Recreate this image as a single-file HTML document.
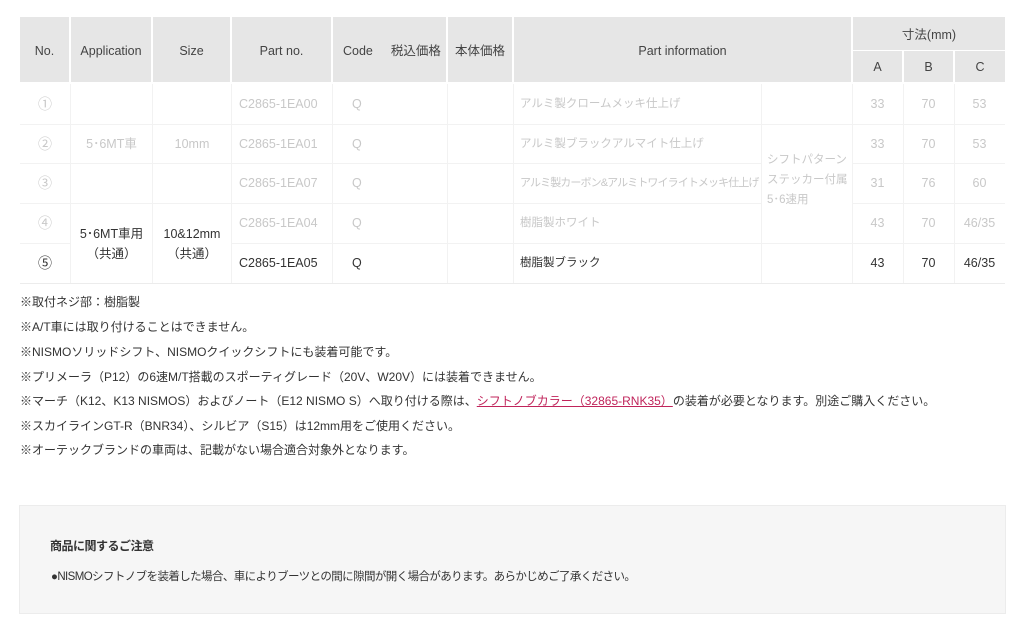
<!DOCTYPE html>
<html><head><meta charset="utf-8"><style>
*{margin:0;padding:0;box-sizing:border-box}
body{width:1024px;height:630px;background:#fff;font-family:"Liberation Sans","Noto Sans CJK JP",sans-serif;color:#333;position:relative;overflow:hidden}
.c{position:absolute;display:flex;align-items:center;justify-content:center;font-size:12.5px;text-align:center;line-height:20px;white-space:nowrap}
.h{background:#e6e6e6;color:#444;padding-top:3px}
.g{color:#c8c8c8}
.l{justify-content:flex-start;padding-left:6px}
.vl{position:absolute;width:1px;background:#f2f2f2}
.hl{position:absolute;height:1px;background:#f2f2f2}
.n{position:absolute;left:20px;font-size:12px;color:#333;line-height:16px;white-space:nowrap}
.num{font-size:14px}
a{color:#c0245b;text-decoration:underline}
</style></head><body>
<div class="c h" style="left:20px;top:17px;width:49px;height:65px">No.</div>
<div class="c h" style="left:71px;top:17px;width:80px;height:65px">Application</div>
<div class="c h" style="left:153px;top:17px;width:77px;height:65px">Size</div>
<div class="c h" style="left:232px;top:17px;width:99px;height:65px">Part no.</div>
<div class="c h" style="left:333px;top:17px;width:113px;height:65px;justify-content:flex-start;padding-left:10px">Code<span style="margin-left:18px">税込価格</span></div>
<div class="c h" style="left:448px;top:17px;width:64px;height:65px">本体価格</div>
<div class="c h" style="left:514px;top:17px;width:337px;height:65px">Part information</div>
<div class="c h" style="left:853px;top:17px;width:152px;height:33px">寸法(mm)</div>
<div class="c h" style="left:853px;top:51px;width:49px;height:31px;padding-top:0">A</div>
<div class="c h" style="left:904px;top:51px;width:49px;height:31px;padding-top:0">B</div>
<div class="c h" style="left:955px;top:51px;width:50px;height:31px;padding-top:0">C</div>
<div class="hl" style="left:20px;top:124px;width:985px"></div>
<div class="hl" style="left:20px;top:163px;width:985px"></div>
<div class="hl" style="left:20px;top:203px;width:985px"></div>
<div class="hl" style="left:20px;top:243px;width:985px"></div>
<div class="hl" style="left:20px;top:283px;width:985px;background:#ececec"></div>
<div class="vl" style="left:70px;top:84px;height:199px"></div>
<div class="vl" style="left:152px;top:84px;height:199px"></div>
<div class="vl" style="left:231px;top:84px;height:199px"></div>
<div class="vl" style="left:332px;top:84px;height:199px"></div>
<div class="vl" style="left:447px;top:84px;height:199px"></div>
<div class="vl" style="left:513px;top:84px;height:199px"></div>
<div class="vl" style="left:761px;top:84px;height:199px"></div>
<div class="vl" style="left:852px;top:84px;height:199px"></div>
<div class="vl" style="left:903px;top:84px;height:199px"></div>
<div class="vl" style="left:954px;top:84px;height:199px"></div>
<div class="c g num" style="left:20px;top:84px;width:50px;height:40px">①</div>
<div class="c g num" style="left:20px;top:124px;width:50px;height:39px">②</div>
<div class="c g num" style="left:20px;top:163px;width:50px;height:40px">③</div>
<div class="c g num" style="left:20px;top:203px;width:50px;height:40px">④</div>
<div class="c num" style="left:20px;top:243px;width:50px;height:40px">⑤</div>
<div class="c g" style="left:71px;top:125px;width:81px;height:38px;background:#fff">5･6MT車</div>
<div class="c g" style="left:153px;top:125px;width:78px;height:38px;background:#fff">10mm</div>
<div class="c" style="left:71px;top:214px;width:81px;height:60px;background:#fff">5･6MT車用<br>（共通）</div>
<div class="c" style="left:153px;top:214px;width:78px;height:60px;background:#fff">10&amp;12mm<br>（共通）</div>
<div class="c g l" style="left:233px;top:84px;width:99px;height:40px">C2865-1EA00</div>
<div class="c g l" style="left:233px;top:124px;width:99px;height:39px">C2865-1EA01</div>
<div class="c g l" style="left:233px;top:163px;width:99px;height:40px">C2865-1EA07</div>
<div class="c g l" style="left:233px;top:203px;width:99px;height:40px">C2865-1EA04</div>
<div class="c l" style="left:233px;top:243px;width:99px;height:40px">C2865-1EA05</div>
<div class="c g l" style="left:346px;top:84px;width:40px;height:40px">Q</div>
<div class="c g l" style="left:346px;top:124px;width:40px;height:39px">Q</div>
<div class="c g l" style="left:346px;top:163px;width:40px;height:40px">Q</div>
<div class="c g l" style="left:346px;top:203px;width:40px;height:40px">Q</div>
<div class="c l" style="left:346px;top:243px;width:40px;height:40px">Q</div>
<div class="c g l" style="left:514px;top:84px;width:247px;height:40px;font-size:11.5px">アルミ製クロームメッキ仕上げ</div>
<div class="c g l" style="left:514px;top:124px;width:247px;height:39px;font-size:11.5px">アルミ製ブラックアルマイト仕上げ</div>
<div class="c g l" style="left:514px;top:163px;width:247px;height:40px;font-size:11px;letter-spacing:-0.9px">アルミ製カーボン&amp;アルミトワイライトメッキ仕上げ</div>
<div class="c g l" style="left:514px;top:203px;width:247px;height:40px;font-size:11.5px">樹脂製ホワイト</div>
<div class="c l" style="left:514px;top:243px;width:247px;height:40px;font-size:11.5px">樹脂製ブラック</div>
<div class="c g" style="left:762px;top:150px;width:90px;height:66px;background:#fff;justify-content:flex-start;align-items:flex-start;padding-left:5px;text-align:left;font-size:11.5px;line-height:20px;white-space:normal">シフトパターン<br>ステッカー付属<br>5･6速用</div>
<div class="c g" style="left:852px;top:84px;width:51px;height:40px">33</div><div class="c g" style="left:903px;top:84px;width:51px;height:40px">70</div><div class="c g" style="left:954px;top:84px;width:51px;height:40px">53</div>
<div class="c g" style="left:852px;top:124px;width:51px;height:39px">33</div><div class="c g" style="left:903px;top:124px;width:51px;height:39px">70</div><div class="c g" style="left:954px;top:124px;width:51px;height:39px">53</div>
<div class="c g" style="left:852px;top:163px;width:51px;height:40px">31</div><div class="c g" style="left:903px;top:163px;width:51px;height:40px">76</div><div class="c g" style="left:954px;top:163px;width:51px;height:40px">60</div>
<div class="c g" style="left:852px;top:203px;width:51px;height:40px">43</div><div class="c g" style="left:903px;top:203px;width:51px;height:40px">70</div><div class="c g" style="left:954px;top:203px;width:51px;height:40px">46/35</div>
<div class="c" style="left:852px;top:243px;width:51px;height:40px">43</div><div class="c" style="left:903px;top:243px;width:51px;height:40px">70</div><div class="c" style="left:954px;top:243px;width:51px;height:40px">46/35</div>
<div class="n" style="top:294px">※取付ネジ部：樹脂製</div>
<div class="n" style="top:319px">※A/T車には取り付けることはできません。</div>
<div class="n" style="top:344px">※NISMOソリッドシフト、NISMOクイックシフトにも装着可能です。</div>
<div class="n" style="top:369px">※プリメーラ（P12）の6速M/T搭載のスポーティグレード（20V、W20V）には装着できません。</div>
<div class="n" style="top:393px">※マーチ（K12、K13 NISMOS）およびノート（E12 NISMO S）へ取り付ける際は、<a>シフトノブカラー（32865-RNK35）</a>の装着が必要となります。別途ご購入ください。</div>
<div class="n" style="top:418px">※スカイラインGT-R（BNR34）、シルビア（S15）は12mm用をご使用ください。</div>
<div class="n" style="top:442px">※オーテックブランドの車両は、記載がない場合適合対象外となります。</div>
<div style="position:absolute;left:19px;top:505px;width:987px;height:109px;background:#f6f6f6;border:1px solid #ececec"></div>
<div style="position:absolute;left:50px;top:537px;font-size:12px;font-weight:bold;color:#333;letter-spacing:-0.5px">商品に関するご注意</div>
<div style="position:absolute;left:51px;top:568px;font-size:11.5px;color:#333;letter-spacing:-0.6px;white-space:nowrap">●NISMOシフトノブを装着した場合、車によりブーツとの間に隙間が開く場合があります。あらかじめご了承ください。</div>
</body></html>
